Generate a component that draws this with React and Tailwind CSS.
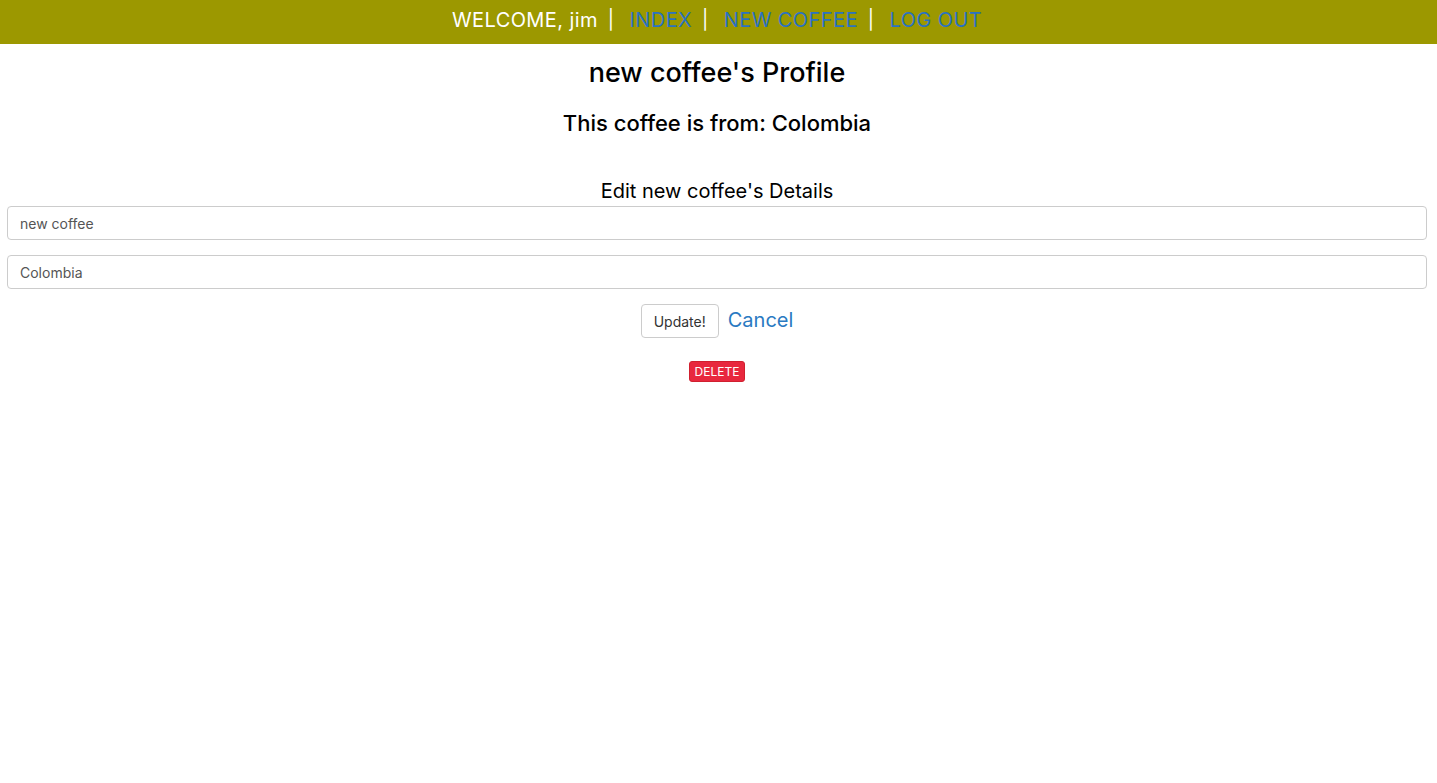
import React from 'react';

export default function App() {
  return (
    <div className="min-h-screen bg-white text-black font-['Inter',sans-serif]">
      {/* Top bar */}
      <nav className="h-[44px] bg-[#9c9800] flex items-center justify-center text-[20px] tracking-[0.4px] pb-[4px] ml-[-3px]">
        <span className="text-white">WELCOME, jim</span>
        <span className="text-white ml-[10px] mr-[15px] text-[19px]">|</span>
        <a className="text-[#2a72c2]">INDEX</a>
        <span className="text-white ml-[10px] mr-[15px] text-[19px]">|</span>
        <a className="text-[#2a72c2]">NEW COFFEE</a>
        <span className="text-white ml-[10px] mr-[15px] text-[19px]">|</span>
        <a className="text-[#2a72c2]">LOG OUT</a>
      </nav>

      <main className="text-center pl-[7px] pr-[10px]">
        <h2 className="text-[27px] font-medium mt-[12px] leading-[34px]">new coffee's Profile</h2>
        <h4 className="text-[22px] font-medium mt-[18px] leading-[30px]">This coffee is from: Colombia</h4>

        <form className="mt-[39px]">
          <p className="text-[20px] leading-[28px]">Edit new coffee's Details</p>
          <input
            className="block w-full h-[34px] mt-[1px] px-[12px] border border-[#ccc] rounded-[4px] text-[14px] text-[#555]"
            defaultValue="new coffee"
          />
          <input
            className="block w-full h-[34px] mt-[15px] px-[12px] border border-[#ccc] rounded-[4px] text-[14px] text-[#555]"
            defaultValue="Colombia"
          />
          <div className="flex items-center justify-center gap-[9px] mt-[15px]">
            <button type="button" className="h-[34px] px-[12px] border border-[#ccc] rounded-[4px] text-[14px] text-[#333] bg-white">
              Update!
            </button>
            <a className="text-[20px] text-[#2a7ac2] pb-[2px]">Cancel</a>
          </div>
        </form>

        <div className="mt-[20px]">
          <button type="button" className="h-[21px] px-[5px] rounded-[3px] bg-[#e8283e] text-white text-[12px] leading-[19px] border border-[#d0202f]">
            DELETE
          </button>
        </div>
      </main>
    </div>
  );
}
